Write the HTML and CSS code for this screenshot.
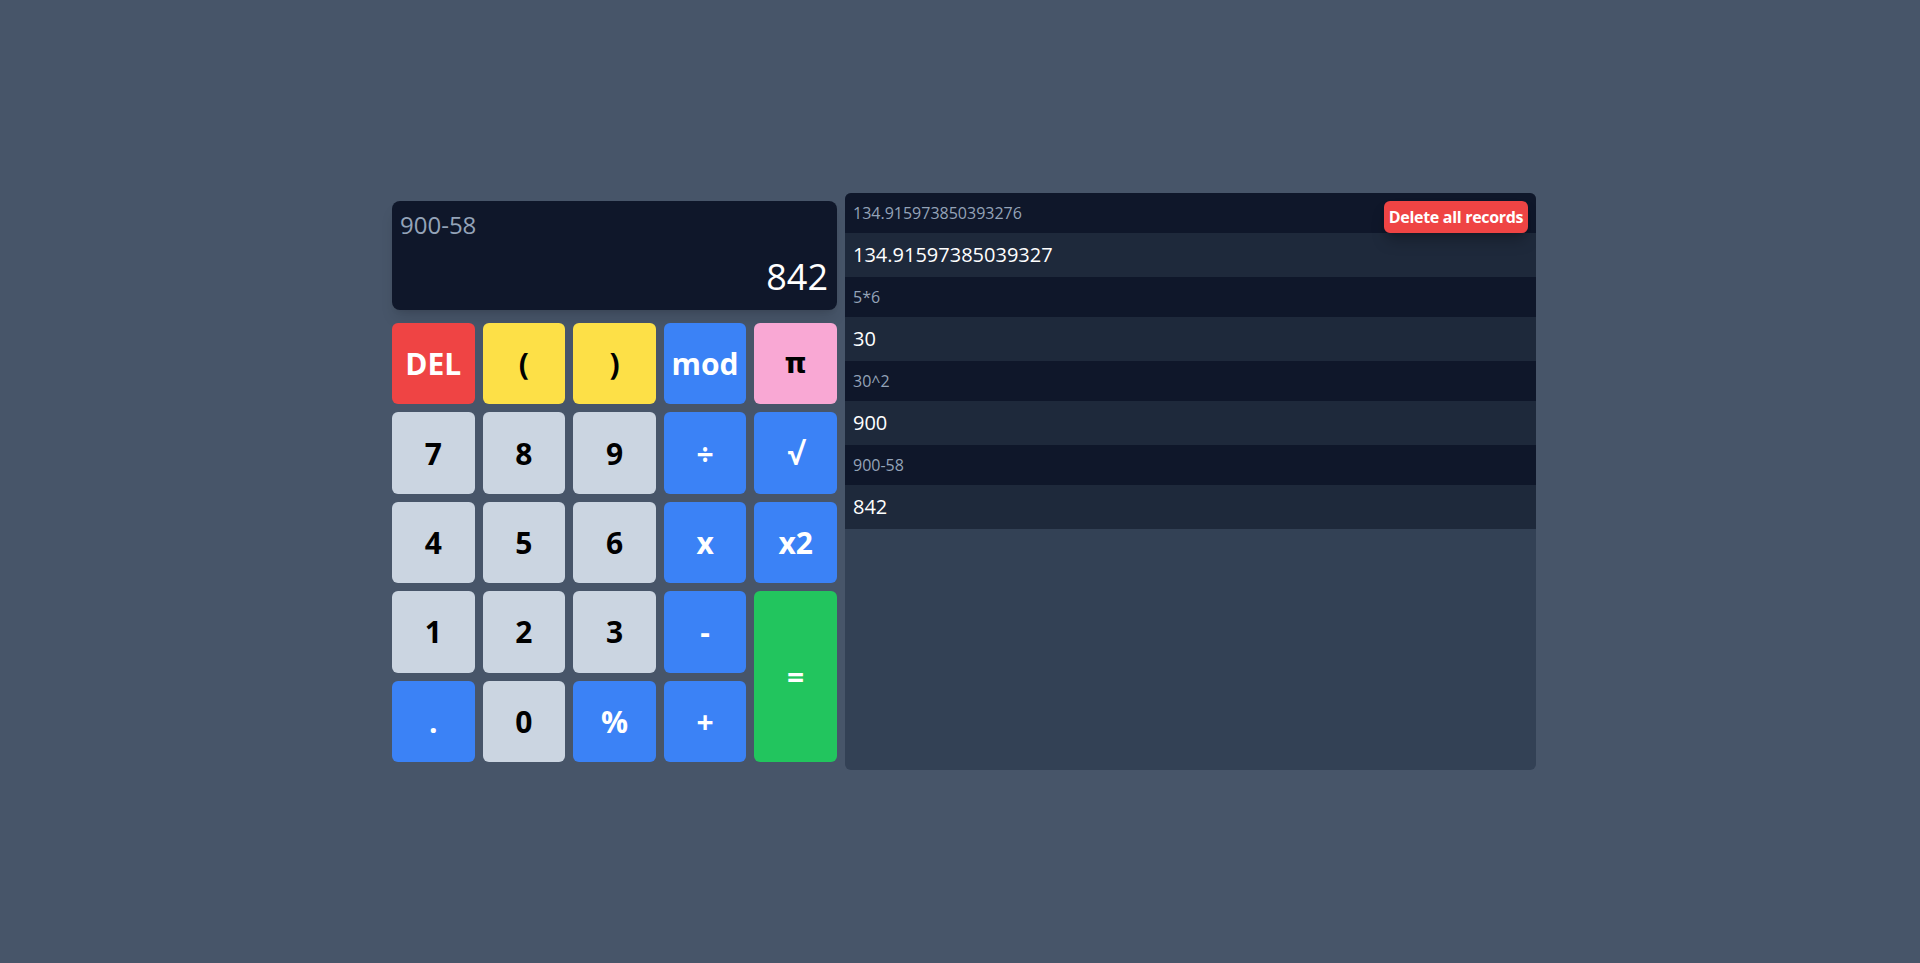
FILE: index.html
```html
<!DOCTYPE html>
<html lang="en">
<head>
<meta charset="utf-8">
<title>Calculator</title>
<link rel="stylesheet" href="styles.css">
</head>
<body>
<main class="app">
  <section class="calc">
    <div class="display">
      <div class="expr">900-58</div>
      <div class="result">842</div>
    </div>
    <div class="keys">
      <button class="key red">DEL</button>
      <button class="key yellow">(</button>
      <button class="key yellow">)</button>
      <button class="key blue">mod</button>
      <button class="key pink pi">π</button>

      <button class="key gray">7</button>
      <button class="key gray">8</button>
      <button class="key gray">9</button>
      <button class="key blue">÷</button>
      <button class="key blue">√</button>

      <button class="key gray">4</button>
      <button class="key gray">5</button>
      <button class="key gray">6</button>
      <button class="key blue">x</button>
      <button class="key blue">x2</button>

      <button class="key gray">1</button>
      <button class="key gray">2</button>
      <button class="key gray">3</button>
      <button class="key blue">-</button>
      <button class="key green tall">=</button>

      <button class="key blue">.</button>
      <button class="key gray">0</button>
      <button class="key blue">%</button>
      <button class="key blue">+</button>
    </div>
  </section>
  <section class="history">
    <button class="clear">Delete all records</button>
    <div class="rec-expr">134.915973850393276</div>
    <div class="rec-res">134.91597385039327</div>
    <div class="rec-expr">5*6</div>
    <div class="rec-res">30</div>
    <div class="rec-expr">30^2</div>
    <div class="rec-res">900</div>
    <div class="rec-expr">900-58</div>
    <div class="rec-res">842</div>
  </section>
</main>
</body>
</html>
```
FILE: styles.css
```css
* { box-sizing: border-box; }

html, body {
  margin: 0;
  padding: 0;
}

body {
  background: #475569;
  font-family: "Open Sans", "Noto Sans", "DejaVu Sans", sans-serif;
}

.app {
  display: flex;
  align-items: center;
  height: 963px;
  padding-left: 392px;
  gap: 8px;
}

.calc {
  width: 445px;
  display: flex;
  flex-direction: column;
  gap: 13px;
}

.display {
  height: 109px;
  background: #0f172a;
  border-radius: 8px;
  padding: 8px;
  display: flex;
  flex-direction: column;
  justify-content: space-between;
  box-shadow: 0 10px 15px -3px rgba(0, 0, 0, 0.12), 0 4px 6px -4px rgba(0, 0, 0, 0.12);
}

.expr {
  font-size: 24px;
  line-height: 32px;
  color: #94a3b8;
}

.result {
  font-size: 36px;
  line-height: 40px;
  color: #ffffff;
  text-align: right;
  margin-bottom: 5px;
  padding-right: 1px;
}

.keys {
  display: grid;
  grid-template-columns: repeat(5, 1fr);
  grid-auto-rows: 81.4px;
  gap: 8px;
}

.key {
  border: none;
  border-radius: 6px;
  font-family: "Open Sans", "DejaVu Sans", sans-serif;
  font-weight: 700;
  font-size: 30px;
  padding: 0;
  display: flex;
  align-items: center;
  justify-content: center;
  color: #000;
}

.pi {
  font-family: "DejaVu Sans", sans-serif;
  font-size: 28px;
}

.red { background: #ef4444; color: #fff; }
.yellow { background: #fde047; color: #000; }
.blue { background: #3b82f6; color: #fff; }
.pink { background: #f9a8d4; color: #000; }
.gray { background: #cbd5e1; color: #000; }
.green { background: #22c55e; color: #fff; }
.tall { grid-row: span 2; }

.history {
  position: relative;
  width: 691px;
  height: 577px;
  background: #334155;
  border-radius: 6px;
  overflow: hidden;
}

.rec-expr {
  background: #0f172a;
  color: #94a3b8;
  font-size: 16px;
  line-height: 24px;
  padding: 8px;
}

.rec-res {
  background: #1e293b;
  color: #ffffff;
  font-size: 20px;
  line-height: 28px;
  padding: 8px;
}

.clear {
  position: absolute;
  top: 8px;
  right: 8px;
  width: 144px;
  height: 32px;
  border: none;
  border-radius: 6px;
  background: #ef4444;
  color: #fff;
  font-family: "Open Sans", sans-serif;
  font-weight: 700;
  font-size: 16px;
  letter-spacing: -0.3px;
  padding: 0;
  box-shadow: 0 10px 15px -3px rgba(0, 0, 0, 0.25), 0 4px 6px -4px rgba(0, 0, 0, 0.25);
}
```
